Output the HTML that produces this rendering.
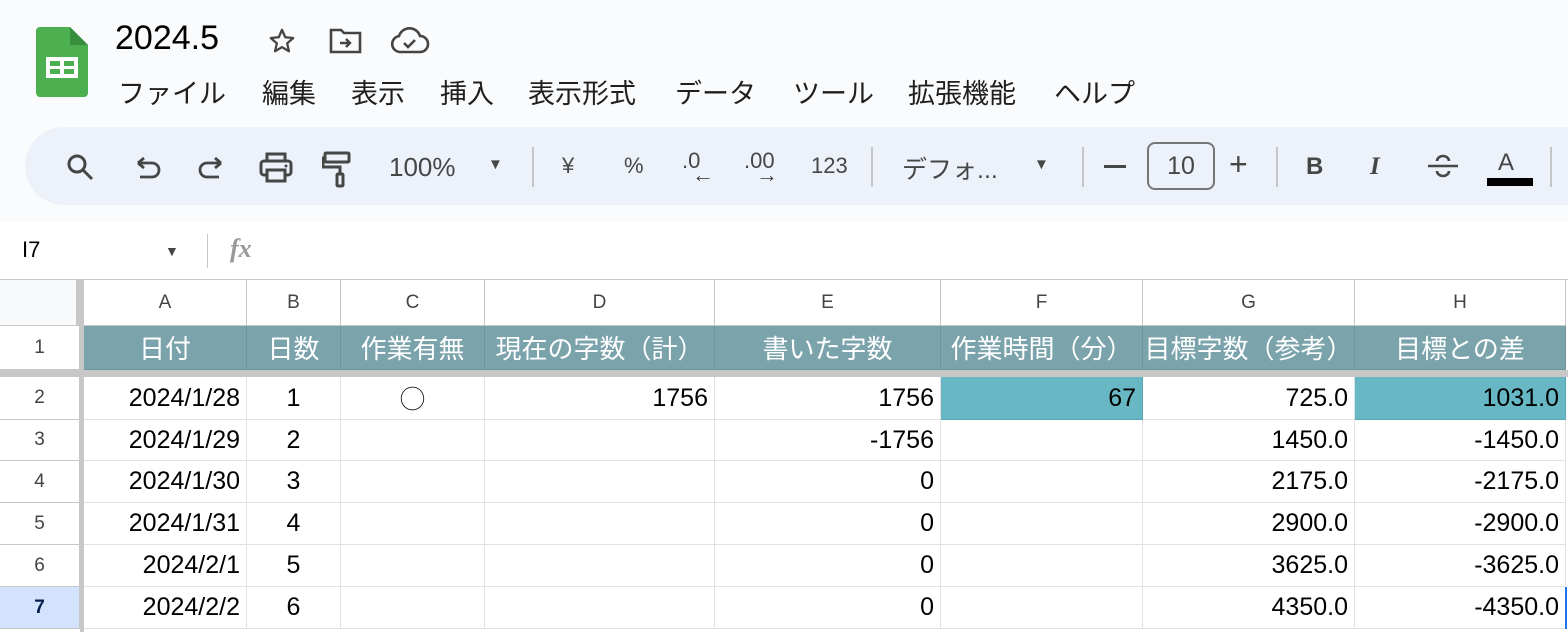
<!DOCTYPE html>
<html><head><meta charset="utf-8"><style>
*{margin:0;padding:0;box-sizing:border-box}
body{width:1568px;height:632px;overflow:hidden;background:#f9fbfd;font-family:"Liberation Sans","Noto Sans CJK JP",sans-serif;position:relative;color:#1f1f1f}
.a{position:absolute}
.menu span{position:absolute;top:72px;font-size:27px;color:#1f1f1f;white-space:nowrap}
.tb{position:absolute;left:25px;top:127px;width:1600px;height:78px;background:#edf2fa;border-radius:39px}
.ti{position:absolute;color:#444746;font-size:24px;white-space:nowrap}
.sep{position:absolute;top:147px;width:2px;height:40px;background:#c4c7c5}
.grid{position:absolute;left:0;top:280px;width:1568px;height:352px;background:#fff}
.c{position:absolute;border-right:1px solid #e1e1e1;border-bottom:1px solid #e1e1e1;font-size:25px;color:#000;display:flex;align-items:center;white-space:nowrap;overflow:hidden}
.h{color:#444;justify-content:center;font-size:19px;border-color:#c7c7c7;background:#fff}
.r{justify-content:flex-end;padding-right:6px}
.m{justify-content:center}
.hd{background:#7ba3ac;color:#fff;justify-content:center;border-color:#6d949d;font-size:26px}
.rh{color:#444;font-size:19px;justify-content:center;border-color:#c7c7c7;background:#fff}
</style></head><body>
<svg class="a" style="left:36px;top:27px" width="52" height="70" viewBox="0 0 52 70"><path d="M4 0h30l18 18v48a4 4 0 0 1-4 4H4a4 4 0 0 1-4-4V4a4 4 0 0 1 4-4z" fill="#4caf50"/><path d="M34 0v18h18z" fill="#388e3c"/><rect x="10" y="30" width="32" height="21" fill="#fff"/><rect x="14" y="34" width="10" height="5" fill="#4caf50"/><rect x="28" y="34" width="10" height="5" fill="#4caf50"/><rect x="14" y="42" width="10" height="5" fill="#4caf50"/><rect x="28" y="42" width="10" height="5" fill="#4caf50"/></svg>
<div class="a" style="left:115px;top:19px;font-size:34px;color:#000">2024.5</div>
<svg class="a" style="left:266px;top:26px" width="32" height="30" viewBox="0 0 24 24"><path d="M12 3l2.6 6 6.4.6-4.9 4.3 1.5 6.3L12 16.9 6.4 20.2l1.5-6.3L3 9.6l6.4-.6z" fill="none" stroke="#444" stroke-width="1.8" stroke-linejoin="round"/></svg>
<svg class="a" style="left:329px;top:27px" width="34" height="28" viewBox="0 0 34 28"><path d="M2 3h10l3 3h16v19H2z" fill="none" stroke="#444" stroke-width="2.6"/><path d="M11 16h10m-4-4 4 4-4 4" fill="none" stroke="#444" stroke-width="2.4"/></svg>
<svg class="a" style="left:390px;top:27px" width="40" height="28" viewBox="0 0 40 28"><path d="M10 25a8 8 0 0 1-1-15.9A11 11 0 0 1 30 9a8 8 0 0 1 0 16z" fill="none" stroke="#444" stroke-width="2.6"/><path d="M14 16l4 4 7-7" fill="none" stroke="#444" stroke-width="2.6"/></svg>
<div class="menu"><span style="left:118px">ファイル</span><span style="left:262px">編集</span><span style="left:351px">表示</span><span style="left:440px">挿入</span><span style="left:528px">表示形式</span><span style="left:675px">データ</span><span style="left:793px">ツール</span><span style="left:908px">拡張機能</span><span style="left:1054px">ヘルプ</span></div>
<div class="tb"></div>
<svg class="a" style="left:64px;top:151px" width="32" height="32" viewBox="0 0 32 32"><circle cx="13" cy="13" r="8" fill="none" stroke="#444746" stroke-width="3"/><path d="M19 19l9 9" stroke="#444746" stroke-width="3"/></svg>
<svg class="a" style="left:134px;top:155px" width="30" height="30" viewBox="0 0 30 30"><path d="M4 8l6-5M4 8l6 5M4 8h14a7 7 0 0 1 0 14H6" fill="none" stroke="#444746" stroke-width="2.8"/></svg>
<svg class="a" style="left:195px;top:155px" width="30" height="30" viewBox="0 0 30 30"><path d="M26 8l-6-5M26 8l-6 5M26 8H12a7 7 0 0 0 0 14h12" fill="none" stroke="#444746" stroke-width="2.8"/></svg>
<svg class="a" style="left:258px;top:152px" width="36" height="32" viewBox="0 0 36 32"><path d="M9 9V2h18v7" fill="none" stroke="#444746" stroke-width="3"/><rect x="3" y="9" width="30" height="14" rx="3" fill="none" stroke="#444746" stroke-width="3"/><rect x="9" y="18" width="18" height="11" fill="#edf2fa" stroke="#444746" stroke-width="3"/><circle cx="28" cy="14" r="1.5" fill="#444746"/></svg>
<svg class="a" style="left:322px;top:150px" width="32" height="38" viewBox="0 0 32 38"><rect x="3" y="3" width="24" height="9" rx="1" fill="none" stroke="#444746" stroke-width="3"/><path d="M3 8H1v9h17v7" fill="none" stroke="#444746" stroke-width="3"/><rect x="15" y="24" width="6" height="12" rx="1" fill="none" stroke="#444746" stroke-width="3"/></svg>
<div class="ti" style="left:389px;top:152px;font-size:26px">100%</div>
<div class="ti" style="left:488px;top:156px;font-size:15px">▼</div>
<div class="sep" style="left:532px"></div>
<div class="ti" style="left:562px;top:153px;font-size:22px">¥</div>
<div class="ti" style="left:624px;top:153px;font-size:22px">%</div>
<div class="ti" style="left:682px;top:148px;font-size:22px">.0</div>
<div class="ti" style="left:692px;top:162px;font-size:22px;font-weight:bold">←</div>
<div class="ti" style="left:744px;top:148px;font-size:22px">.00</div>
<div class="ti" style="left:756px;top:162px;font-size:22px;font-weight:bold">→</div>
<div class="ti" style="left:811px;top:153px;font-size:22px">123</div>
<div class="sep" style="left:871px"></div>
<div class="ti" style="left:902px;top:150px;font-size:25px">デフォ...</div>
<div class="ti" style="left:1034px;top:156px;font-size:15px">▼</div>
<div class="sep" style="left:1082px"></div>
<div class="a" style="left:1104px;top:165px;width:22px;height:3px;background:#444746"></div>
<div class="a" style="left:1147px;top:142px;width:68px;height:48px;border:2px solid #747775;border-radius:8px;font-size:25px;color:#444746;text-align:center;line-height:44px">10</div>
<div class="ti" style="left:1229px;top:146px;font-size:32px">+</div>
<div class="sep" style="left:1276px"></div>
<div class="ti" style="left:1306px;top:153px;font-weight:bold;font-size:24px">B</div>
<div class="ti" style="left:1370px;top:153px;font-weight:bold;font-style:italic;font-size:25px;font-family:'Liberation Serif',serif">I</div>
<svg class="a" style="left:1426px;top:152px" width="34" height="30" viewBox="0 0 34 30"><path d="M2 14h30" stroke="#444746" stroke-width="2.6"/><path d="M11 9a6 5 0 0 1 12 0M11 19a6 5 0 0 0 12 0" fill="none" stroke="#444746" stroke-width="2.6"/></svg>
<div class="ti" style="left:1498px;top:149px;font-size:24px">A</div>
<div class="a" style="left:1487px;top:178px;width:46px;height:8px;background:#000"></div>
<div class="sep" style="left:1550px"></div>
<div class="a" style="left:0;top:222px;width:1568px;height:58px;background:#fff;border-bottom:1px solid #c7c7c7"></div>
<div class="a" style="left:22px;top:237px;font-size:22px;color:#000">I7</div>
<div class="a" style="left:165px;top:243px;font-size:14px;color:#444">▼</div>
<div class="a" style="left:207px;top:234px;width:1px;height:34px;background:#c7c7c7"></div>
<div class="a" style="left:230px;top:234px;font-size:26px;color:#999;font-style:italic;font-family:'Liberation Serif',serif;font-weight:bold">fx</div>
<div class="grid">
<div class="c h" style="left:0;top:0;width:80px;height:46px;background:#f8f9fa"></div>
<div class="a" style="left:76px;top:0;width:8px;height:46px;background:#c7c7c7"></div>
<div class="a" style="left:0;top:90px;width:1568px;height:7px;background:#c7c7c7"></div>
<div class="a" style="left:80px;top:0;width:4px;height:352px;background:#c7c7c7"></div>
</div>
<div id="g"></div>
<script>
var X=[84,247,341,485,715,941,1143,1355,1566],L="ABCDEFGH";
var RY=[[377,420],[420,461],[461,503],[503,545],[545,587],[587,629]];
var h='';
for(var i=0;i<8;i++){var w=X[i+1]-X[i];
h+='<div class="c h" style="left:'+X[i]+'px;top:280px;width:'+w+'px;height:46px">'+L[i]+'</div>';}
var hd=["日付","日数","作業有無","現在の字数（計）","書いた字数","作業時間（分）","目標字数（参考）","目標との差"];
for(var i=0;i<8;i++){var w=X[i+1]-X[i];h+='<div class="c hd" style="left:'+X[i]+'px;top:326px;width:'+w+'px;height:44px">'+hd[i]+'</div>';}
h+='<div class="c rh" style="left:0;top:326px;width:80px;height:44px">1</div>';
var D=[["2024/1/28","1","◯","1756","1756","67","725.0","1031.0"],["2024/1/29","2","","","-1756","","1450.0","-1450.0"],["2024/1/30","3","","","0","","2175.0","-2175.0"],["2024/1/31","4","","","0","","2900.0","-2900.0"],["2024/2/1","5","","","0","","3625.0","-3625.0"],["2024/2/2","6","","","0","","4350.0","-4350.0"]];
for(var r=0;r<6;r++){var y=RY[r][0],hh=RY[r][1]-y;
h+='<div class="c rh" style="left:0;top:'+y+'px;width:80px;height:'+hh+'px;'+(r==5?'background:#d3e3fd;font-weight:bold;color:#041e49':'')+'">'+(r+2)+'</div>';
for(var i=0;i<8;i++){var w=X[i+1]-X[i],cls=(i==1||i==2)?'m':'r',bg=(r==0&&(i==5||i==7))?'background:#67b8c4;border-color:#5aa7b3;':'';
h+='<div class="c '+cls+'" style="left:'+X[i]+'px;top:'+y+'px;width:'+w+'px;height:'+hh+'px;'+bg+'">'+D[r][i]+'</div>';}}
h+='<div class="a" style="left:1565px;top:587px;width:2px;height:42px;background:#1a73e8"></div>';
document.getElementById('g').innerHTML=h;
</script>
</body></html>
